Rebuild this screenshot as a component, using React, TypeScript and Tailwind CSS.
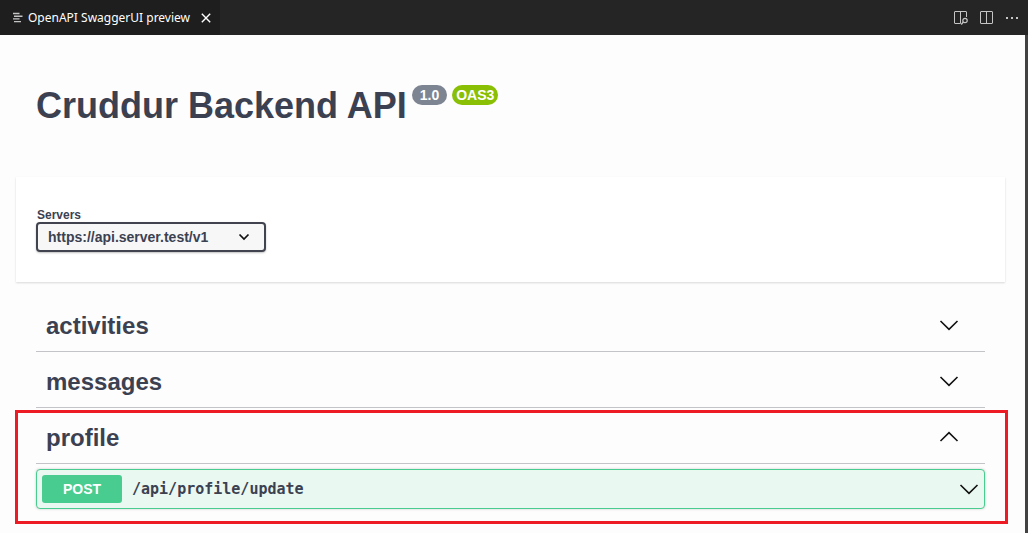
import { useState } from "react";

function Chevron({ up = false }: { up?: boolean }) {
  return (
    <svg width="20" height="20" viewBox="0 0 20 20" fill="none" stroke="#111" strokeWidth="1.6" aria-hidden="true">
      {up ? <path d="M1.5 14 L10 5.7 L18.5 14" /> : <path d="M1.5 6 L10 14.3 L18.5 6" />}
    </svg>
  );
}

function ListIcon() {
  return (
    <svg className="shrink-0" width="10" height="12" viewBox="0 0 10 12" fill="none" stroke="#c4c4c4" strokeWidth="1.4" aria-hidden="true">
      <path d="M0 1.5H6.5M1 4.2H9.5M0 6.9H6.5M1 9.6H8" />
    </svg>
  );
}

function CloseIcon() {
  return (
    <svg width="10" height="10" viewBox="0 0 10 10" stroke="#fff" strokeWidth="1.4" aria-hidden="true">
      <path d="M.8 .8 9.2 9.2M9.2 .8 .8 9.2" />
    </svg>
  );
}

function PreviewIcon() {
  return (
    <svg width="16" height="16" viewBox="0 0 16 16" fill="none" stroke="#c5c5c5" aria-hidden="true">
      <path d="M7.5 13.5H2Q1.5 13.5 1.5 13V2Q1.5 1.5 2 1.5H13Q13.5 1.5 13.5 2V7M7.5 1.5V13.5" />
      <circle cx="12" cy="10.5" r="2.2" strokeWidth="1.2" />
      <path d="M10.4 12.1 8.2 14.4" strokeWidth="1.4" />
    </svg>
  );
}

function SplitIcon() {
  return (
    <svg width="16" height="16" viewBox="0 0 16 16" fill="none" stroke="#c5c5c5" aria-hidden="true">
      <path d="M2 1.5H13Q13.5 1.5 13.5 2V13Q13.5 13.5 13 13.5H2Q1.5 13.5 1.5 13V2Q1.5 1.5 2 1.5ZM7.5 1.5V13.5" />
    </svg>
  );
}

function MoreIcon() {
  return (
    <svg width="16" height="16" viewBox="0 0 16 16" fill="#c5c5c5" aria-hidden="true">
      <path d="M1 7h2v2H1zM6 7h2v2H6zM11 7h2v2h-2z" />
    </svg>
  );
}

function TabBar() {
  return (
    <header className="flex h-[35px] items-stretch justify-between bg-[#252526]">
      <div className="flex w-[220px] items-center bg-[#1e1e1e] pl-[13px] font-['Noto_Sans',sans-serif] text-xs text-white">
        <ListIcon />
        <span className="ml-[5px] whitespace-nowrap pt-px">OpenAPI SwaggerUI preview</span>
        <button type="button" aria-label="Close tab" className="ml-[11px]">
          <CloseIcon />
        </button>
      </div>
      <div className="flex items-center gap-[10px] pr-[7px]">
        <button type="button" aria-label="Open preview"><PreviewIcon /></button>
        <button type="button" aria-label="Split editor"><SplitIcon /></button>
        <button type="button" aria-label="More actions"><MoreIcon /></button>
      </div>
    </header>
  );
}

function TagHeader({ name, open, onToggle }: { name: string; open: boolean; onToggle: () => void }) {
  return (
    <h2 className="border-b border-[#3b4151]/30">
      <button
        type="button"
        aria-expanded={open}
        onClick={onToggle}
        className="flex h-[55px] w-full items-center justify-between pt-[2px] pr-[26px] pl-[10px] text-2xl font-bold"
      >
        <span className="pt-[2px]">{name}</span>
        <Chevron up={open} />
      </button>
    </h2>
  );
}

function Operation() {
  return (
    <button
      type="button"
      className="mt-[5px] flex h-10 w-full items-center rounded border border-[#49cc90] bg-[#e9f8f1] px-[5px] shadow-[0_0_3px_rgba(0,0,0,0.19)]"
    >
      <span className="flex h-7 w-20 items-center justify-center rounded-[3px] bg-[#49cc90] text-sm font-bold text-white">
        POST
      </span>
      <span className="ml-[10px] font-['DejaVu_Sans_Mono',monospace] text-[15px] font-bold">/api/profile/update</span>
      <span className="ml-auto"><Chevron /></span>
    </button>
  );
}

export default function App() {
  const [open, setOpen] = useState<Record<string, boolean>>({ profile: true });
  const toggle = (name: string) => setOpen((state) => ({ ...state, [name]: !state[name] }));

  return (
    <div className="flex min-h-screen flex-col bg-[#fdfdfd] font-['Liberation_Sans',sans-serif] text-[#3b4151]">
      <TabBar />
      <main className="grow border-r-[3px] border-[#424242] pr-5 pb-[9px] pl-4">
        <div className="flex items-start gap-[5px] px-5 pt-[50px] pb-[51px]">
          <h1 className="pt-px text-4xl font-bold">Cruddur Backend API</h1>
          <span className="flex h-5 items-center rounded-full bg-[#7d8492] px-2 text-sm font-bold text-white">1.0</span>
          <span className="flex h-5 items-center rounded-full bg-[#89bf04] px-1 text-sm font-bold text-white">OAS3</span>
        </div>

        <section className="bg-white px-5 py-[30px] shadow-[0_1px_2px_rgba(0,0,0,0.15)]">
          <label htmlFor="servers" className="block pt-px pl-px text-xs leading-[14px] font-bold">Servers</label>
          <div className="grid w-[230px] items-center">
            <select
              id="servers"
              className="col-start-1 row-start-1 h-[30px] appearance-none rounded border-2 border-[#41444e] bg-[#f7f7f7] pr-10 pl-[10px] text-sm font-bold shadow-[0_1px_2px_rgba(0,0,0,0.25)]"
            >
              <option>https://api.server.test/v1</option>
            </select>
            <svg className="pointer-events-none col-start-1 row-start-1 mr-4 justify-self-end" width="12" height="8" viewBox="0 0 12 8" fill="none" stroke="#111" strokeWidth="1.7" aria-hidden="true">
              <path d="M1.5 1.5 6 6 10.5 1.5" />
            </svg>
          </div>
        </section>

        <div className="px-5 pt-[14px]">
          <TagHeader name="activities" open={!!open.activities} onToggle={() => toggle("activities")} />
          <TagHeader name="messages" open={!!open.messages} onToggle={() => toggle("messages")} />
          <section className="relative">
            <div className="pointer-events-none absolute top-[2px] -right-[23px] -bottom-[15px] -left-[21px] border-[3px] border-[#ed1c24]" />
            <TagHeader name="profile" open={!!open.profile} onToggle={() => toggle("profile")} />
            {open.profile && <Operation />}
          </section>
        </div>
      </main>
    </div>
  );
}
